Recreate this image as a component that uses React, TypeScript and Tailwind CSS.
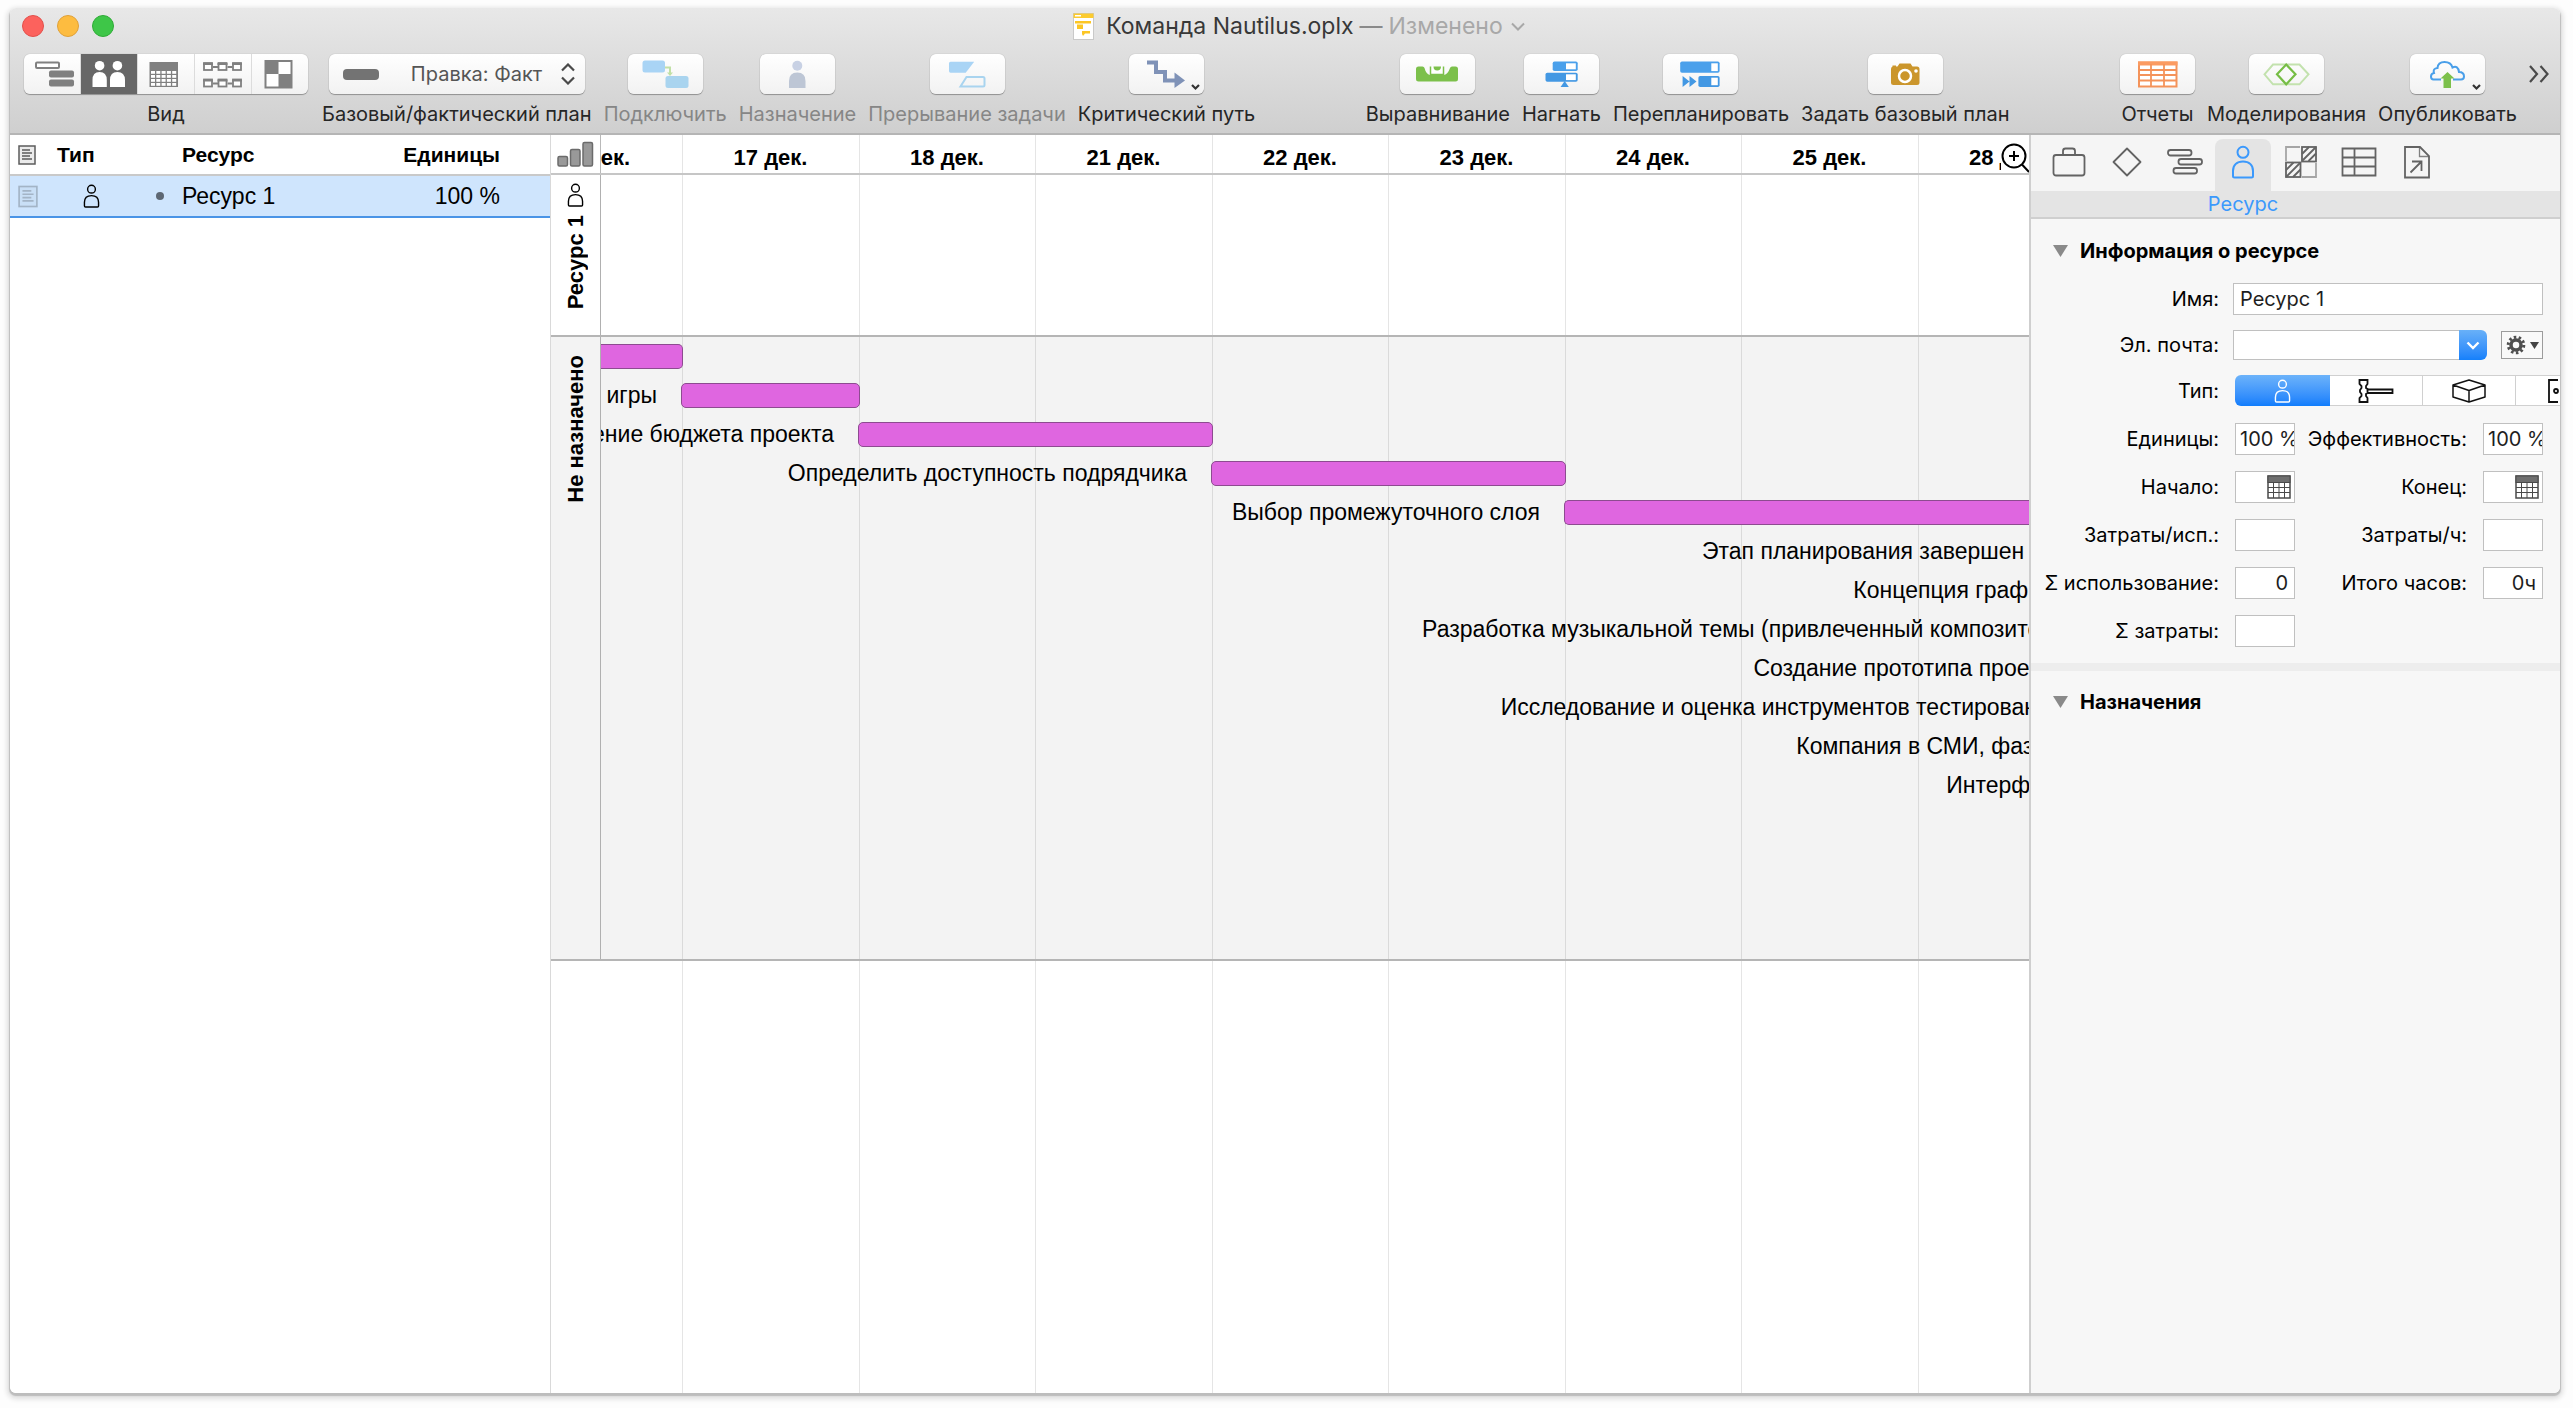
import React from 'react';

type Kids = { children?: React.ReactNode };

const INTER = "font-['Inter',sans-serif]";
const HELV = "font-['Liberation_Sans',sans-serif]";
const DAY_GRID =
  'grid grid-cols-[minmax(0,82fr)_minmax(0,177fr)_minmax(0,176fr)_minmax(0,177fr)_minmax(0,176fr)_minmax(0,177fr)_minmax(0,176fr)_minmax(0,177fr)_minmax(0,110fr)]';

/* ---------- icons ---------- */

function PersonIcon({ className }: { className: string }) {
  return (
    <svg viewBox="6 1 24 34" className={className} fill="none" stroke="currentColor" strokeWidth="2">
      <circle cx="18" cy="8.3" r="5.5" />
      <path d="M8 32V27C8 21 12 17.5 18 17.5S28 21 28 27V32Q28 33.5 26.5 33.5H9.5Q8 33.5 8 32Z" />
    </svg>
  );
}

function NoteIcon({ className }: { className: string }) {
  return (
    <svg viewBox="0 0 18 20" className={className} fill="none" stroke="currentColor" strokeWidth="1.5">
      <rect x="1" y="1" width="16" height="18" fill="currentColor" fillOpacity="0.12" />
      <path d="M4 5h8M4 8h10M4 11h8M4 14h10" />
    </svg>
  );
}

function Disclosure() {
  return (
    <svg viewBox="0 0 15 12" className="h-3 w-[15px]" fill="#8a8a8a">
      <path d="M0 0H15L7.500 12Z" />
    </svg>
  );
}

function CalendarIcon() {
  return (
    <svg viewBox="0 0 24 24" className="h-6 w-6" fill="none" stroke="#4a4a4a">
      <rect x="1" y="1" width="22" height="22" fill="#fff" strokeWidth="1.500" />
      <rect x="1" y="1" width="22" height="6.500" fill="#6e6e6e" />
      <path d="M6.500 7V23M12 7V23M17.500 7V23M1 12.500H23M1 17.500H23" strokeWidth="1" />
    </svg>
  );
}

function SmallChevron() {
  return <path d="M63 31L66.500 34.500L70 31" fill="none" stroke="#333" strokeWidth="2.2" />;
}

function ToolSvg({ children }: Kids) {
  return (
    <svg viewBox="0 0 75 40" className="h-10 w-[75px]" fill="none">
      {children}
    </svg>
  );
}

const CONNECT = (
  <ToolSvg>
    <path d="M37 13.500H42V19" stroke="#c1e0a6" strokeWidth="2" />
    <path d="M39 18.500H45L42 22Z" fill="#c1e0a6" />
    <rect x="14.500" y="6.500" width="22.500" height="12" rx="2.500" fill="#a9d4f5" />
    <rect x="37.500" y="22" width="23" height="12" rx="2.500" fill="#a9d4ef" />
  </ToolSvg>
);
const ASSIGN = (
  <ToolSvg>
    <circle cx="37.300" cy="11.700" r="5" fill="#c8d1e4" />
    <path d="M29 34V27Q29 18.500 37.300 18.500T45.500 27V34Z" fill="#bdc6d5" />
  </ToolSvg>
);
const SPLIT = (
  <ToolSvg>
    <path d="M20.500 7.700H44.200L35.700 18.700H20.500Q19 18.700 19 17V9.500Q19 7.700 20.500 7.700Z" fill="#a9d4f5" />
    <path d="M36.500 23H53Q54.500 23 54.500 24.500V31Q54.500 32.500 53 32.500H30.500Z" stroke="#a9d4ef" strokeWidth="2" />
  </ToolSvg>
);
const CRITICAL = (
  <ToolSvg>
    <path d="M18 8.500H27V18H36V26.500H47" stroke="#7f92b7" strokeWidth="4" />
    <path d="M45.500 18.500L56 26.500L45.500 34Z" fill="#7f92b7" />
    <SmallChevron />
  </ToolSvg>
);
const LEVEL = (
  <ToolSvg>
    <path
      d="M18.500 12.500H22.500Q24 12.500 24.500 14Q26 20 30 21H44Q48 20 50 14Q50.500 12.500 52 12.500H55.500Q58 12.500 58 15V25Q58 27.500 55.500 27.500H18.500Q16 27.500 16 25V15Q16 12.500 18.500 12.500Z"
      fill="#7cc04b"
    />
    <path d="M30.500 12.500V20.500H43.500V12.500" fill="#fff" stroke="#7cc04b" strokeWidth="1.500" />
    <path d="M33.500 12.500H41Q41 16.500 37.200 16.500T33.500 12.500Z" fill="#7cc04b" />
  </ToolSvg>
);
const CATCHUP = (
  <ToolSvg>
    <rect x="28.700" y="7.500" width="25" height="9.500" rx="1.800" fill="#4aa0eb" />
    <rect x="42" y="9.300" width="9.800" height="6" fill="#fff" />
    <rect x="21.500" y="18.700" width="32.200" height="9" rx="1.800" fill="#4398e3" />
    <rect x="42" y="20.300" width="9.800" height="5.800" fill="#fff" />
    <path d="M40.700 27L44.800 33H36.600Z" fill="#4398e3" />
  </ToolSvg>
);
const RESCHEDULE = (
  <ToolSvg>
    <rect x="17.200" y="7.500" width="39.400" height="11.300" rx="1.800" fill="#4aa0eb" />
    <rect x="48.300" y="9.300" width="6.500" height="7.800" fill="#fff" />
    <rect x="35.400" y="22" width="21.200" height="11" rx="1.800" fill="#4398e3" />
    <rect x="48.300" y="23.700" width="6.500" height="7.500" fill="#fff" />
    <path d="M19.600 22L26.500 27.500L19.600 33ZM26.500 22L33.500 27.500L26.500 33Z" fill="#4398e3" />
  </ToolSvg>
);
const CAMERA = (
  <ToolSvg>
    <path d="M31.500 9.500H42.500L44.500 12.500H49Q51.500 12.500 51.500 15V28.500Q51.500 31 49 31H25.500Q23 31 23 28.500V15Q23 13 24.500 12.500V11.500H28V12.500H29.500Z" fill="#cb962c" />
    <circle cx="37" cy="22" r="6" stroke="#fff" strokeWidth="2.500" />
    <circle cx="48" cy="17" r="1.800" fill="#fff" />
  </ToolSvg>
);
const REPORTS = (
  <ToolSvg>
    <rect x="19" y="8.500" width="37.500" height="24" fill="#fff" stroke="#f4935a" strokeWidth="2" />
    <rect x="18" y="7.500" width="39.500" height="4" fill="#fb9b62" />
    <path d="M19 16H57M19 21H57M19 26.500H57M31 10V33M44 10V33" stroke="#f4935a" strokeWidth="1.800" />
  </ToolSvg>
);
const MODEL = (
  <ToolSvg>
    <path d="M15.500 20.300L24 10.500H50.500L59.500 20.300L50.500 30.300H24Z" stroke="#c3e2ae" strokeWidth="2" />
    <path d="M37.200 10.500L46.500 20.300L37.200 30.300L28 20.300Z" stroke="#76bd45" strokeWidth="2.200" />
  </ToolSvg>
);
const PUBLISH = (
  <ToolSvg>
    <path
      d="M31 25.500H23.500Q21 25.500 21 22.500Q21 19.500 24 19Q22.500 14.500 27.500 14Q28 8 34.500 8Q41 8 42.500 13.500Q48 11 49 18Q54 18 54 22.500Q54 25.500 51 25.500H43"
      stroke="#4a9fe9"
      strokeWidth="2"
    />
    <path d="M37.500 18L44.500 24.500H41V34H33.500V24.500H30.500Z" fill="#7cc04b" />
    <SmallChevron />
  </ToolSvg>
);

/* ---------- toolbar ---------- */

function ToolItem({ label, icon, disabled }: { label: string; icon: React.ReactNode; disabled?: boolean }) {
  return (
    <button
      type="button"
      disabled={disabled}
      className="flex shrink-0 flex-col items-center gap-1.5 text-[#262626] disabled:text-[#868686]"
    >
      <span className="rounded-md bg-linear-to-b from-white to-[#f2f2f2] shadow-[0_1px_1px_rgba(0,0,0,0.3),0_0_1px_rgba(0,0,0,0.35)]">
        {icon}
      </span>
      <span className="text-xl leading-7 whitespace-nowrap">{label}</span>
    </button>
  );
}

function GroupSvg({ children }: Kids) {
  return (
    <svg viewBox="0 0 56 40" className="h-10 w-14" fill="none">
      {children}
    </svg>
  );
}

const VIEWS: { name: string; active?: boolean; icon: React.ReactNode }[] = [
  {
    name: 'Диаграмма',
    icon: (
      <GroupSvg>
        <rect x="12" y="8.500" width="23" height="5.500" rx="1" stroke="#808080" strokeWidth="2" fill="#fff" />
        <rect x="25" y="16.500" width="25" height="7" rx="2" fill="#808080" />
        <rect x="25" y="25.500" width="25" height="7" rx="2" fill="#808080" />
      </GroupSvg>
    ),
  },
  {
    name: 'Ресурсы',
    active: true,
    icon: (
      <GroupSvg>
        <g fill="#fff">
          <circle cx="18.600" cy="11.700" r="4.800" />
          <circle cx="36.400" cy="11.700" r="4.800" />
          <path d="M11.500 33V26Q11.500 18 18.600 18T25.800 26V33ZM29 33V26Q29 18 36.400 18T44 26V33Z" />
        </g>
      </GroupSvg>
    ),
  },
  {
    name: 'Календарь',
    icon: (
      <GroupSvg>
        <rect x="11.500" y="8" width="28.500" height="25" fill="#808080" />
        <g fill="#fff">
          {[17, 21, 25, 29].map((y) =>
            [13, 18.3, 23.6, 28.9, 34.2].map((x) => <rect key={`${x}-${y}`} x={x} y={y} width="4" height="2.800" />),
          )}
        </g>
      </GroupSvg>
    ),
  },
  {
    name: 'Сеть',
    icon: (
      <GroupSvg>
        {[8, 24.5].map((y) =>
          [8, 22.5, 37].map((x) => (
            <g key={`${x}-${y}`}>
              <rect x={x + 1} y={y + 1} width="8" height="7" stroke="#808080" strokeWidth="1.800" fill="#fff" />
              <path d={`M${x} ${y + 2}h10M${x + 10} ${y + 5}${x < 37 ? 'h5' : ''}`} stroke="#808080" strokeWidth="2" />
            </g>
          )),
        )}
      </GroupSvg>
    ),
  },
  {
    name: 'Стили',
    icon: (
      <GroupSvg>
        <rect x="13.500" y="7" width="26" height="26.500" fill="#fff" stroke="#808080" strokeWidth="2" />
        <rect x="13" y="6.500" width="13.500" height="13.500" fill="#808080" />
        <rect x="26.500" y="20" width="13.500" height="13.500" fill="#808080" />
      </GroupSvg>
    ),
  },
];

function TitleBar() {
  return (
    <div className="flex h-9 items-center justify-between pl-3">
      <div className="flex w-40 gap-[13px]">
        <button type="button" aria-label="Закрыть" className="h-[22px] w-[22px] rounded-full border border-[#e2504b] bg-[#fc625d]" />
        <button type="button" aria-label="Свернуть" className="h-[22px] w-[22px] rounded-full border border-[#e0a139] bg-[#fdbc40]" />
        <button type="button" aria-label="Развернуть" className="h-[22px] w-[22px] rounded-full border border-[#2fab37] bg-[#3ec648]" />
      </div>
      <div className="flex items-center text-[23px] leading-7">
        <svg viewBox="0 0 21 27" className="mr-3 h-[27px] w-[21px]">
          <rect x="0.500" y="0.500" width="20" height="26" fill="#fff" stroke="#c9c9c9" />
          <rect x="0.500" y="0.500" width="20" height="4.500" fill="#fccb2e" />
          <path d="M2 2H8V3.500H2Z" fill="#fff" />
          <path d="M2 8H18V10.500H2ZM4 11.500H10V16H4ZM9 18H17V20.500H12L10 23L9 21Z" fill="#fcc624" />
        </svg>
        <h1 className="text-[#383838]">Команда Nautilus.oplx</h1>
        <button type="button" className="ml-1.5 flex items-center text-[#a8a8a8]">
          <span className="mr-1.5 text-[#8a8a8a]">—</span> Изменено
          <svg viewBox="0 0 14 9" className="ml-2 h-[9px] w-3.5" fill="none" stroke="#a8a8a8" strokeWidth="2">
            <path d="M1 1.500L7 7.500L13 1.500" />
          </svg>
        </button>
      </div>
      <div className="w-36" />
    </div>
  );
}

function Toolbar() {
  return (
    <div className="flex justify-between pt-2.5 pr-[11px] pb-[5px] pl-3.5">
      <div className="flex gap-3">
        <div className="mr-0.5 flex flex-col items-center gap-1.5">
          <div className="flex overflow-hidden rounded-md bg-linear-to-b from-white to-[#f2f2f2] shadow-[0_1px_1px_rgba(0,0,0,0.3),0_0_1px_rgba(0,0,0,0.35)]">
            {VIEWS.map((v) => (
              <button
                key={v.name}
                type="button"
                aria-label={v.name}
                aria-pressed={!!v.active}
                className="border-r border-[#dcdcdc] last:border-r-0 aria-pressed:bg-[#676767]"
              >
                {v.icon}
              </button>
            ))}
          </div>
          <span className="text-xl leading-7 text-[#262626]">Вид</span>
        </div>
        <label className="flex flex-col items-center gap-1.5">
          <span className="flex h-10 w-64 items-center rounded-md bg-linear-to-b from-white to-[#f2f2f2] pr-2.5 pl-3.5 shadow-[0_1px_1px_rgba(0,0,0,0.3),0_0_1px_rgba(0,0,0,0.35)]">
            <span className="h-[11px] w-9 rounded-sm bg-[#737373]" />
            <select className="ml-8 flex-1 appearance-none bg-transparent text-xl text-[#555]" defaultValue="fact">
              <option value="fact">Правка: Факт</option>
            </select>
            <svg viewBox="0 0 14 22" className="h-[22px] w-3.5" fill="none" stroke="#4a4a4a" strokeWidth="2.200">
              <path d="M1 7.500L7 1.500L13 7.500M1 14.500L7 20.500L13 14.500" />
            </svg>
          </span>
          <span className="text-xl leading-7 whitespace-nowrap text-[#262626]">Базовый/фактический план</span>
        </label>
        <ToolItem label="Подключить" icon={CONNECT} disabled />
        <ToolItem label="Назначение" icon={ASSIGN} disabled />
        <ToolItem label="Прерывание задачи" icon={SPLIT} disabled />
        <ToolItem label="Критический путь" icon={CRITICAL} />
      </div>
      <div className="flex gap-3">
        <ToolItem label="Выравнивание" icon={LEVEL} />
        <ToolItem label="Нагнать" icon={CATCHUP} />
        <ToolItem label="Перепланировать" icon={RESCHEDULE} />
        <ToolItem label="Задать базовый план" icon={CAMERA} />
      </div>
      <div className="flex gap-3">
        <ToolItem label="Отчеты" icon={REPORTS} />
        <ToolItem label="Моделирования" icon={MODEL} />
        <ToolItem label="Опубликовать" icon={PUBLISH} />
        <button type="button" aria-label="Ещё" className="h-10">
          <svg viewBox="0 0 20 18" className="h-[18px] w-5" fill="none" stroke="#4a4a4a" strokeWidth="2.200">
            <path d="M1 1L8 9L1 17M11.500 1L18.500 9L11.500 17" />
          </svg>
        </button>
      </div>
    </div>
  );
}

/* ---------- resource list ---------- */

function ResourceList() {
  return (
    <section className={`w-[541px] shrink-0 border-r border-[#d9d9d9] bg-white ${HELV}`}>
      <table className="w-full table-fixed border-collapse text-black">
        <colgroup>
          <col className="w-[47px]" />
          <col className="w-[89px]" />
          <col />
          <col className="w-52" />
        </colgroup>
        <thead>
          <tr className="h-10 border-b-2 border-[#c9c9c9] text-left text-[21px] leading-7">
            <th className="pl-2 font-bold">
              <NoteIcon className="h-5 w-[18px] text-[#5c5c5c]" />
            </th>
            <th className="font-bold">Тип</th>
            <th className="pl-9 font-bold">Ресурс</th>
            <th className="pr-[50px] text-right font-bold">Единицы</th>
          </tr>
        </thead>
        <tbody>
          <tr className="h-[42px] border-y-2 border-[#4a94e6] bg-[#cfe5fd] text-[23px] leading-7">
            <td className="pl-2">
              <NoteIcon className="h-[23px] w-5 text-[#a3b4c6]" />
            </td>
            <td className="pl-[26px]">
              <PersonIcon className="h-6 w-[17px] text-black" />
            </td>
            <td>
              <span className="flex items-center">
                <span className="mr-[18px] ml-2.5 h-2 w-2 rounded-full bg-[#5d6773]" />
                Ресурс 1
              </span>
            </td>
            <td className="pr-[50px] text-right">100 %</td>
          </tr>
        </tbody>
      </table>
    </section>
  );
}

/* ---------- timeline ---------- */

function DayLines() {
  return (
    <div className={`absolute inset-0 ${DAY_GRID}`}>
      {[0, 1, 2, 3, 4, 5, 6, 7].map((d) => (
        <div key={d} className="border-r border-black/10" />
      ))}
    </div>
  );
}

const DAYS = ['17 дек.', '18 дек.', '21 дек.', '22 дек.', '23 дек.', '24 дек.', '25 дек.'];

const BARS = [
  { label: '', labelSpan: 'hidden', barSpan: 'col-start-1 col-end-2 rounded-r-[5px] border-l-0' },
  { label: 'Концепция игры', labelSpan: 'col-start-1 col-end-2', barSpan: 'col-start-2 col-end-3 -ml-0.5 rounded-[5px]' },
  { label: 'Составление бюджета проекта', labelSpan: 'col-start-1 col-end-3', barSpan: 'col-start-3 col-end-5 -ml-0.5 rounded-[5px]' },
  { label: 'Определить доступность подрядчика', labelSpan: 'col-start-1 col-end-5', barSpan: 'col-start-5 col-end-7 -ml-0.5 rounded-[5px]' },
  { label: 'Выбор промежуточного слоя', labelSpan: 'col-start-1 col-end-7', barSpan: 'col-start-7 col-end-10 -ml-0.5 rounded-l-[5px] border-r-0' },
];

const UPCOMING = [
  { label: 'Этап планирования завершен', start: 77.1 },
  { label: 'Концепция графики', start: 87.7 },
  { label: 'Разработка музыкальной темы (привлеченный композитор)', start: 57.5 },
  { label: 'Создание прототипа проекта', start: 80.7 },
  { label: 'Исследование и оценка инструментов тестирования', start: 63 },
  { label: 'Компания в СМИ, фаза 1', start: 83.7 },
  { label: 'Интерфейс', start: 94.2 },
];

function Timeline() {
  return (
    <section className={`flex min-w-0 flex-1 flex-col bg-white text-black ${HELV}`}>
      <div className="flex h-10 border-b-2 border-[#c6c6c6]">
        <div className="flex w-[50px] shrink-0 items-center justify-center border-r border-[#b9b9b9]">
          <svg viewBox="0 0 38 26" className="h-[26px] w-[38px]" fill="#999" stroke="#6b6b6b" strokeWidth="1.500">
            <rect x="1" y="15.500" width="9.500" height="9.500" rx="1.500" />
            <rect x="13.500" y="8.500" width="9.500" height="16.500" rx="1.500" />
            <rect x="26" y="1.500" width="9.500" height="23.500" rx="1.500" />
          </svg>
        </div>
        <div className="relative min-w-0 flex-1 overflow-hidden text-[22px] leading-[46px] font-bold whitespace-nowrap">
          <DayLines />
          <div className={`relative ${DAY_GRID}`}>
            <div className="flex justify-end pr-[53px]">16 дек.</div>
            {DAYS.map((d) => (
              <div key={d} className="pr-0.5 text-center">
                {d}
              </div>
            ))}
            <div className="pl-[50px]">28 дек.</div>
          </div>
          <button type="button" aria-label="Увеличить масштаб" className="absolute top-0 right-0 h-10 w-7 bg-white">
            <svg viewBox="0 0 28 40" className="h-10 w-7" fill="none" stroke="#000" strokeWidth="2">
              <circle cx="13" cy="21" r="11.500" />
              <path d="M8 21H18M13 16V26M21 29.500L28 37" />
            </svg>
          </button>
        </div>
      </div>

      <div className="flex h-[162px] border-b-2 border-[#b5b5b5]">
        <div className="flex w-[50px] shrink-0 flex-col items-center gap-2 border-r border-[#b0b0b0] pt-2">
          <PersonIcon className="h-6 w-[17px]" />
          <span className="rotate-180 text-[22px] leading-7 font-bold [writing-mode:vertical-rl]">Ресурс 1</span>
        </div>
        <div className="relative min-w-0 flex-1">
          <DayLines />
        </div>
      </div>

      <div className="flex h-[624px] border-b-2 border-[#b5b5b5] bg-[#f3f3f3]">
        <div className="flex w-[50px] shrink-0 flex-col items-center border-r border-[#b0b0b0] pt-[18px]">
          <span className="rotate-180 text-[22px] leading-7 font-bold [writing-mode:vertical-rl]">Не назначено</span>
        </div>
        <div className="relative min-w-0 flex-1 overflow-hidden text-[23px] leading-[39px] whitespace-nowrap">
          <DayLines />
          <div className="relative">
            {BARS.map((b) => (
              <div key={b.barSpan} className={`h-[39px] items-center ${DAY_GRID}`}>
                <div className={`row-start-1 flex justify-end pr-[26px] ${b.labelSpan}`}>{b.label}</div>
                <div className={`row-start-1 h-[25px] border border-[#8d4b90] bg-[#df66e0] ${b.barSpan}`} />
              </div>
            ))}
            {UPCOMING.map((u) => (
              <div key={u.label} className="h-[39px]" style={{ paddingLeft: `${u.start}%` }}>
                {u.label}
              </div>
            ))}
          </div>
        </div>
      </div>

      <div className="flex flex-1">
        <div className="w-[50px] shrink-0" />
        <div className="relative min-w-0 flex-1">
          <DayLines />
        </div>
      </div>
    </section>
  );
}

/* ---------- inspector ---------- */

function TabSvg({ children }: Kids) {
  return (
    <svg viewBox="0 0 36 36" className="h-9 w-9" fill="none" stroke="currentColor" strokeWidth="1.800">
      {children}
    </svg>
  );
}

const TABS: { name: string; active?: boolean; icon: React.ReactNode }[] = [
  {
    name: 'Проект',
    icon: (
      <TabSvg>
        <rect x="2.500" y="11" width="31" height="20.500" rx="2.500" />
        <path d="M12 11V7Q12 4.500 14.500 4.500H21.500Q24 4.500 24 7V11" />
      </TabSvg>
    ),
  },
  {
    name: 'Веха',
    icon: (
      <TabSvg>
        <path d="M18 4.500L31.500 18L18 31.500L4.500 18Z" strokeLinejoin="round" />
      </TabSvg>
    ),
  },
  {
    name: 'Задача',
    icon: (
      <TabSvg>
        <rect x="1" y="6" width="23.500" height="5.500" rx="2.500" />
        <rect x="11.500" y="15" width="23.500" height="5.500" rx="2.500" />
        <rect x="6.500" y="24" width="23.500" height="5.500" rx="2.500" />
      </TabSvg>
    ),
  },
  { name: 'Ресурс', active: true, icon: <PersonIcon className="h-9 w-6" /> },
  {
    name: 'Стили',
    icon: (
      <TabSvg>
        <rect x="19" y="3" width="14" height="14.500" />
        <rect x="3" y="18.500" width="14.500" height="14.500" />
        <path d="M19 10L26 3M19 17L33 3M25.500 17L33 9.500M3 26L10.500 18.500M3 33L17.500 18.500M10 33L17.500 25.500" />
        <path d="M3 17V3H17M19 33H33V19" opacity="0.55" />
      </TabSvg>
    ),
  },
  {
    name: 'Данные',
    icon: (
      <TabSvg>
        <path d="M1.500 4.500H34.500V31.500H1.500ZM13.500 4.500V31.500M1.500 13.500H34.500M1.500 22.500H34.500" />
      </TabSvg>
    ),
  },
  {
    name: 'Вложения',
    icon: (
      <TabSvg>
        <path d="M6 3H21L30 12V33.500H6Z" />
        <path d="M20.500 3V12.500H30" strokeWidth="1.300" opacity="0.8" />
        <path d="M11.500 28.500L22.500 17.500M13 17.500H22.500V27" />
      </TabSvg>
    ),
  },
];

const LABEL = 'flex justify-end text-xl leading-8 whitespace-nowrap text-black';
const BOX = 'h-8 w-full min-w-0 border border-[#c0c0c0] bg-white text-xl leading-7 text-[#1e1e1e]';

function SectionHeading({ children }: Kids) {
  return (
    <h2 className="pb-0.5">
      <button type="button" aria-expanded="true" className="flex items-center gap-3 pl-[22px] text-xl leading-7 font-bold text-black">
        <Disclosure />
        {children}
      </button>
    </h2>
  );
}

function Field({ id, label, value = '', className = 'px-1.5 text-right' }: { id: string; label: string; value?: string; className?: string }) {
  return (
    <>
      <label htmlFor={id} className={LABEL}>
        {label}
      </label>
      <input id={id} defaultValue={value} className={`${BOX} ${className}`} />
    </>
  );
}

function DateField({ id, label }: { id: string; label: string }) {
  return (
    <>
      <label htmlFor={id} className={LABEL}>
        {label}
      </label>
      <div className="flex h-8 items-center border border-[#c0c0c0] bg-white pr-[3px]">
        <input id={id} className="min-w-0 flex-1 bg-transparent text-xl" />
        <button type="button" aria-label="Календарь">
          <CalendarIcon />
        </button>
      </div>
    </>
  );
}

function Inspector() {
  return (
    <aside className="flex w-[531px] shrink-0 flex-col border-l-2 border-[#cfcfcf] bg-[#f7f7f7]">
      <div className="border-b-2 border-[#cfcfcf] bg-[#f5f5f5]">
        <div className="flex gap-0.5 pt-1 pl-2.5">
          {TABS.map((t) => (
            <button
              key={t.name}
              type="button"
              aria-label={t.name}
              aria-pressed={!!t.active}
              className="flex h-[52px] w-14 items-center justify-center rounded-t-lg pb-1.5 text-[#636363] aria-pressed:bg-[#e4e4e4] aria-pressed:text-[#3b99fc]"
            >
              {t.icon}
            </button>
          ))}
        </div>
        <div className="flex bg-[#e4e4e4] pl-[158px]">
          <span className="w-[108px] text-center text-xl leading-[26px] text-[#3b99fc]">Ресурс</span>
        </div>
      </div>

      <div className="flex flex-col gap-4 border-b-8 border-[#ededed] pt-[18px] pb-4">
        <SectionHeading>Информация о ресурсе</SectionHeading>
        <div className="grid grid-cols-[188px_minmax(0,1fr)] gap-x-3.5 gap-y-3.5">
          <label htmlFor="name" className={LABEL}>
            Имя:
          </label>
          <div className="pr-[17px]">
            <input id="name" defaultValue="Ресурс 1" className={`${BOX} px-1.5`} />
          </div>
          <label htmlFor="mail" className={LABEL}>
            Эл. почта:
          </label>
          <div className="flex min-w-0 items-center gap-3.5 pr-[17px]">
            <div className="flex h-[30px] min-w-0 flex-1">
              <input id="mail" className="w-full min-w-0 flex-1 border border-r-0 border-[#c0c0c0] bg-white px-1.5 text-xl" />
              <button type="button" aria-label="Выбрать адрес" className="flex w-7 shrink-0 items-center justify-center rounded-r-md bg-linear-to-b from-[#68b0f8] to-[#1380fb]">
                <svg viewBox="0 0 14 9" className="h-[9px] w-3.5" fill="none" stroke="#fff" strokeWidth="2.400">
                  <path d="M1.500 1.500L7 7L12.500 1.500" />
                </svg>
              </button>
            </div>
            <button type="button" aria-label="Действия" className="flex h-7 w-[42px] shrink-0 items-center justify-center gap-1 border border-[#9c9c9c] bg-[#f9f9f9]">
              <svg viewBox="0 0 20 20" className="h-5 w-5" fill="none" stroke="#4f4f4f">
                <circle cx="10" cy="10" r="5" strokeWidth="3.500" />
                <circle cx="10" cy="10" r="7.800" strokeWidth="3" strokeDasharray="2.500 2.400" />
              </svg>
              <svg viewBox="0 0 9 7" className="h-[7px] w-[9px]" fill="#444">
                <path d="M0 0H9L4.500 7Z" />
              </svg>
            </button>
          </div>
          <span className={LABEL}>Тип:</span>
          <div className="flex h-[31px] overflow-hidden pl-0.5">
            <button type="button" aria-label="Сотрудник" aria-pressed="true" className="flex w-[95px] shrink-0 items-center justify-center rounded-l-md bg-linear-to-b from-[#6cb3fa] to-[#0f7dfc]">
              <PersonIcon className="h-6 w-[17px] text-white" />
            </button>
            <button type="button" aria-label="Оборудование" aria-pressed="false" className="flex w-[93px] shrink-0 items-center justify-center border-y border-r border-[#d0d0d0] bg-white">
              <svg viewBox="0 0 36 24" className="h-6 w-9" fill="none" stroke="#111" strokeWidth="1.800">
                <path d="M1.500 1H9.500V5L8 7V9L9.500 10V14L8 15V17L9.500 19V23H1.500V19L3.500 17V15L2 13V11L3.500 9V7L1.500 5Z" />
                <path d="M9.500 10.500H34.500V14H9.500" />
              </svg>
            </button>
            <button type="button" aria-label="Материал" aria-pressed="false" className="flex w-[93px] shrink-0 items-center justify-center border-y border-r border-[#d0d0d0] bg-white">
              <svg viewBox="0 0 36 24" className="h-6 w-9" fill="none" stroke="#111" strokeWidth="1.500" strokeLinejoin="round">
                <path d="M18 1L34 6V18L18 23L2 18V6ZM2 6L18 11.500L34 6M18 11.500V23" />
              </svg>
            </button>
            <button type="button" aria-label="Группа" aria-pressed="false" className="flex flex-1 items-center justify-end border-y border-[#d0d0d0] bg-white">
              <svg viewBox="0 0 13 24" className="h-6 w-[13px]" fill="none" stroke="#111" strokeWidth="1.800">
                <path d="M11 1H2V23H11" />
                <circle cx="9" cy="12" r="2" />
              </svg>
            </button>
          </div>
        </div>
        <div className="grid grid-cols-[188px_60px_minmax(0,1fr)_60px] gap-x-4 gap-y-4 pr-[17px]">
          <Field id="units" label="Единицы:" value="100 %" className="pl-1 text-left" />
          <Field id="efficiency" label="Эффективность:" value="100 %" className="pl-1 text-left" />
          <DateField id="start" label="Начало:" />
          <DateField id="end" label="Конец:" />
          <Field id="cost-use" label="Затраты/исп.:" />
          <Field id="cost-hour" label="Затраты/ч:" />
          <Field id="total-use" label="Σ использование:" value="0" />
          <Field id="total-hours" label="Итого часов:" value="0ч" />
          <Field id="total-cost" label="Σ затраты:" />
        </div>
      </div>
      <div className="pt-[17px]">
        <SectionHeading>Назначения</SectionHeading>
      </div>
    </aside>
  );
}

export default function App() {
  return (
    <div className={`flex min-h-screen flex-col bg-[#fdfdfd] pt-2 pr-[13px] pb-[15px] pl-2.5 ${INTER}`}>
      <div className="flex flex-1 flex-col overflow-hidden rounded-md bg-white shadow-[0_2px_1px_1px_#bdbdbd,0_3px_5px_3px_#dedede]">
        <header className="border-b-2 border-[#b5b5b5] bg-linear-to-b from-[#e8e8e8] to-[#cfcfcf]">
          <TitleBar />
          <Toolbar />
        </header>
        <main className="flex flex-1">
          <ResourceList />
          <Timeline />
          <Inspector />
        </main>
      </div>
    </div>
  );
}
